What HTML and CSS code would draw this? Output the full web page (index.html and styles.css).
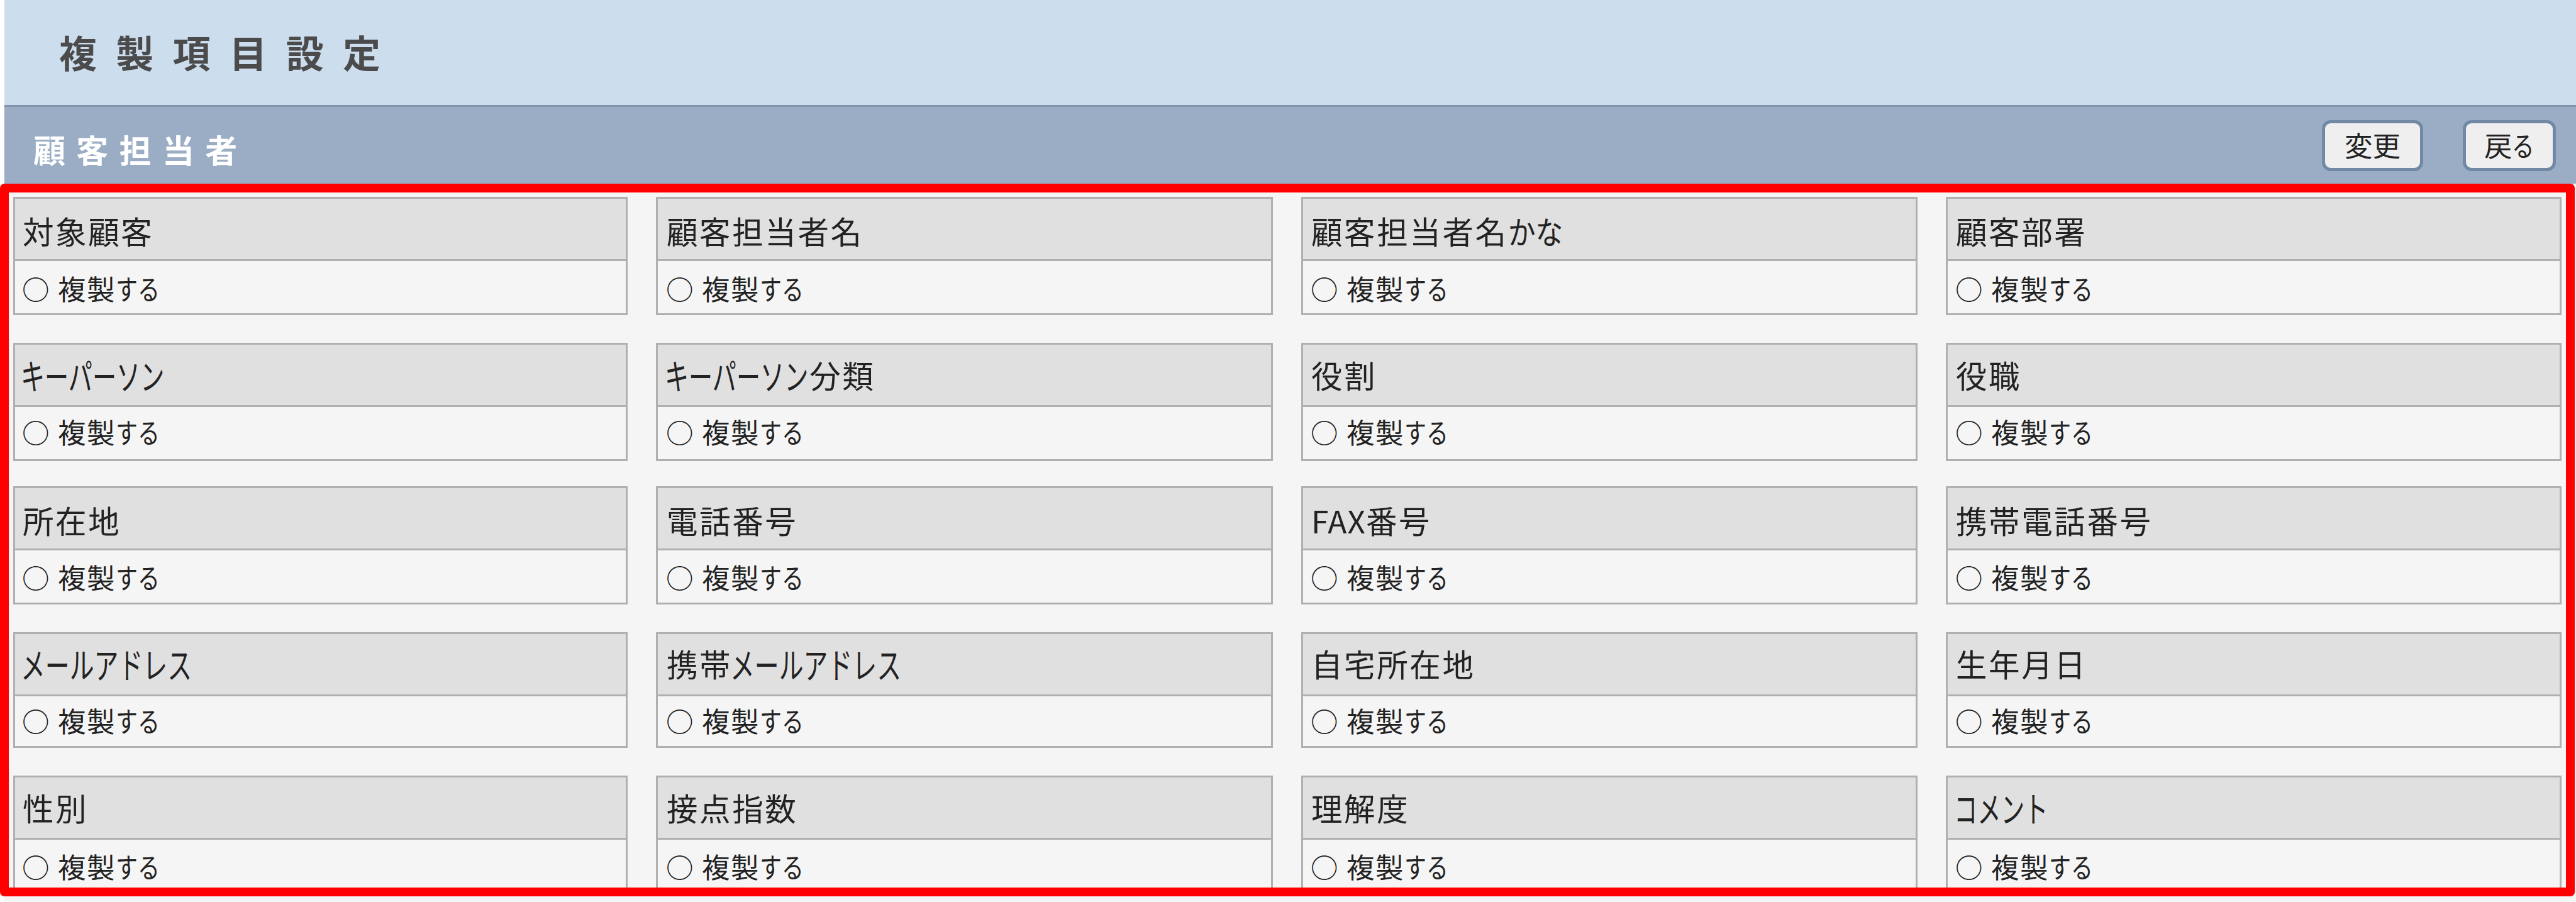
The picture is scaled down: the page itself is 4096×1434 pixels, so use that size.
FILE: index.html
```html
<!DOCTYPE html>
<html lang="ja">
<head>
<meta charset="utf-8">
<title>複製項目設定</title>
<link rel="stylesheet" href="styles.css">
</head>
<body>
<div class="page">
  <header class="title-band"><h1 class="title">複製項目設定</h1></header>
  <div class="toolbar">
    <h2 class="subtitle">顧客担当者</h2>
    <div class="actions">
      <button class="btn btn-change">変更</button>
      <button class="btn btn-back">戻<span class="kana k-ru">る</span></button>
    </div>
  </div>
  <main class="fields">
    <section class="row row-1">
      <div class="card"><div class="head">対象顧客</div><div class="option"><span class="mark">○</span>複製<span class="kana k-suru">する</span></div></div>
      <div class="card"><div class="head">顧客担当者名</div><div class="option"><span class="mark">○</span>複製<span class="kana k-suru">する</span></div></div>
      <div class="card"><div class="head">顧客担当者名<span class="kana k-kana">かな</span></div><div class="option"><span class="mark">○</span>複製<span class="kana k-suru">する</span></div></div>
      <div class="card"><div class="head">顧客部署</div><div class="option"><span class="mark">○</span>複製<span class="kana k-suru">する</span></div></div>
    </section>
    <section class="row row-2">
      <div class="card"><div class="head"><span class="kana k-person">キーパーソン</span></div><div class="option"><span class="mark">○</span>複製<span class="kana k-suru">する</span></div></div>
      <div class="card"><div class="head"><span class="kana k-person">キーパーソン</span>分類</div><div class="option"><span class="mark">○</span>複製<span class="kana k-suru">する</span></div></div>
      <div class="card"><div class="head">役割</div><div class="option"><span class="mark">○</span>複製<span class="kana k-suru">する</span></div></div>
      <div class="card"><div class="head">役職</div><div class="option"><span class="mark">○</span>複製<span class="kana k-suru">する</span></div></div>
    </section>
    <section class="row row-3">
      <div class="card"><div class="head">所在地</div><div class="option"><span class="mark">○</span>複製<span class="kana k-suru">する</span></div></div>
      <div class="card"><div class="head">電話番号</div><div class="option"><span class="mark">○</span>複製<span class="kana k-suru">する</span></div></div>
      <div class="card"><div class="head"><span class="latin">FAX</span>番号</div><div class="option"><span class="mark">○</span>複製<span class="kana k-suru">する</span></div></div>
      <div class="card"><div class="head">携帯電話番号</div><div class="option"><span class="mark">○</span>複製<span class="kana k-suru">する</span></div></div>
    </section>
    <section class="row row-4">
      <div class="card"><div class="head"><span class="kana k-mail">メールアドレス</span></div><div class="option"><span class="mark">○</span>複製<span class="kana k-suru">する</span></div></div>
      <div class="card"><div class="head">携帯<span class="kana k-mail">メールアドレス</span></div><div class="option"><span class="mark">○</span>複製<span class="kana k-suru">する</span></div></div>
      <div class="card"><div class="head">自宅所在地</div><div class="option"><span class="mark">○</span>複製<span class="kana k-suru">する</span></div></div>
      <div class="card"><div class="head">生年月日</div><div class="option"><span class="mark">○</span>複製<span class="kana k-suru">する</span></div></div>
    </section>
    <section class="row row-5">
      <div class="card"><div class="head">性別</div><div class="option"><span class="mark">○</span>複製<span class="kana k-suru">する</span></div></div>
      <div class="card"><div class="head">接点指数</div><div class="option"><span class="mark">○</span>複製<span class="kana k-suru">する</span></div></div>
      <div class="card"><div class="head">理解度</div><div class="option"><span class="mark">○</span>複製<span class="kana k-suru">する</span></div></div>
      <div class="card"><div class="head"><span class="kana k-comment">コメント</span></div><div class="option"><span class="mark">○</span>複製<span class="kana k-suru">する</span></div></div>
    </section>
  </main>
  <div class="highlight"></div>
</div>
</body>
</html>
```

FILE: styles.css
```css
* { box-sizing: border-box; }

body {
  margin: 0;
  background: #fff;
  color: #222;
  font-family: "Noto Sans CJK JP", sans-serif;
}

.page {
  position: relative;
  width: 4096px;
  height: 1434px;
  padding-left: 7px;
  overflow: hidden;
}

.title-band {
  height: 170px;
  padding: 40px 0 0 87px;
  background: #ccdded;
  border-bottom: 3px solid #7f94ab;
}

.title {
  margin: 0;
  font-size: 60px;
  line-height: 84px;
  font-weight: 700;
  letter-spacing: 30.2px;
  color: #4b4b4b;
}

.toolbar {
  display: flex;
  justify-content: space-between;
  height: 122px;
  padding: 21px 32px 0 46px;
  background: #9aadc5;
}

.subtitle {
  margin: 11px 0 0;
  font-size: 51px;
  line-height: 70px;
  font-weight: 700;
  letter-spacing: 17.3px;
  color: #fff;
}

.actions { display: flex; gap: 63px; }

.btn {
  height: 81px;
  padding: 0 0 3px;
  border: 5px solid #7189a5;
  border-radius: 14px;
  background: #efefef;
  color: #222;
  font-family: inherit;
  font-size: 44.5px;
  line-height: 60px;
  white-space: nowrap;
}
.btn-change { width: 161px; }
.btn-back { width: 148px; }

.fields {
  height: 1142px;
  padding: 21px 23px 0 14px;
  background: #f5f5f5;
}

.row {
  display: grid;
  grid-template-columns: 977px 981px 980px 979px;
  column-gap: 45px;
  height: var(--pitch);
}
.row-1 { --pitch: 232px; --card: 188px; --head-pad: 21px; --option-pad: 13px; }
.row-2 { --pitch: 228px; --card: 188px; --head-pad: 18px; --option-pad: 9px; }
.row-3 { --pitch: 232px; --card: 188px; --head-pad: 21px; --option-pad: 12px; }
.row-4 { --pitch: 228px; --card: 184px; --head-pad: 17px; --option-pad: 8px; }
.row-5 { --pitch: 188px; --card: 184px; --head-pad: 18px; --option-pad: 12px; }

.card {
  --indent: 13px;
  height: var(--card);
  border: 3px solid #b0b0b0;
  white-space: nowrap;
}
.card:first-child { --indent: 12px; }
.card:nth-child(2) { --indent: 14px; }

.head {
  height: 99px;
  padding: var(--head-pad) 0 0 var(--indent);
  background: #e0e0e0;
  border-bottom: 3px solid #b0b0b0;
  font-size: 49.5px;
  line-height: 60px;
  letter-spacing: 2.6px;
}

.option {
  padding: var(--option-pad) 0 0 var(--indent);
  font-size: 44.5px;
  line-height: 60px;
  letter-spacing: 1.5px;
}

.mark {
  display: inline-block;
  width: 57px;
  margin-left: -1px;
  font-size: 43.5px;
  letter-spacing: 0;
}

.latin { letter-spacing: 1px; }

/* Condensed kana runs, as in a UI face with narrow kana */
.kana {
  display: inline-block;
  width: var(--w);
  letter-spacing: 0;
  text-align: left;
  transform: scale(var(--s), var(--v, 1));
  transform-origin: 0 50%;
}
.k-ru { --w: .8em; --s: .8; }
.k-suru { --w: 1.56em; --s: .785; }
.k-kana { --w: 1.76em; --s: .88; }
.k-person, .k-mail, .k-comment { --v: 1.14; margin-left: -3px; }
.k-person { --w: 4.65em; --s: .77; }
.k-mail { --w: 5.46em; --s: .785; }
.k-comment { --w: 2.96em; --s: .755; }

.highlight {
  position: absolute;
  left: 0;
  top: 292px;
  width: 4094px;
  height: 1133px;
  border: 14px solid #f00;
  border-radius: 7px;
}
```
